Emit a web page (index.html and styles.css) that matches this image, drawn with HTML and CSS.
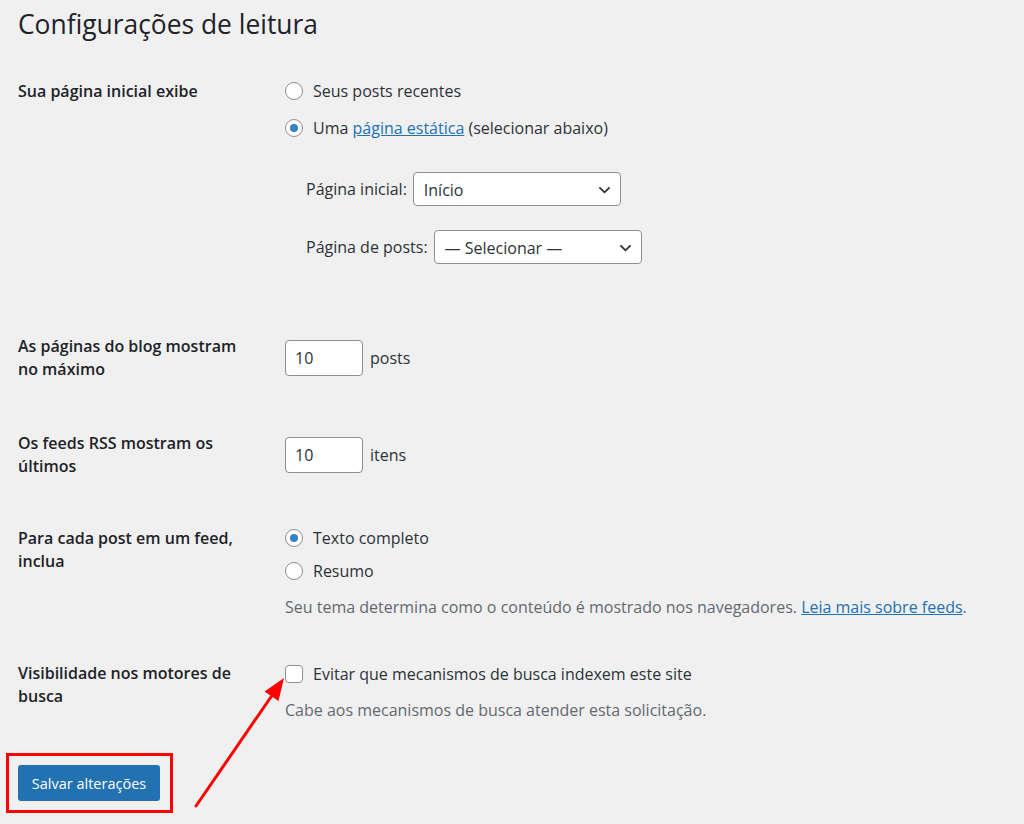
FILE: index.html
```html
<!DOCTYPE html>
<html lang="pt-BR">
<head>
<meta charset="utf-8">
<title>Configurações de leitura</title>
<link rel="stylesheet" href="styles.css">
</head>
<body>
<div class="wrap">
  <h1 class="title">Configurações de leitura</h1>

  <div class="row row1">
    <div class="th">Sua página inicial exibe</div>
    <div class="td">
      <label class="opt"><span class="radio"></span>Seus posts recentes</label>
      <label class="opt opt2"><span class="radio checked"></span>Uma&nbsp;<a class="link" href="#">página estática</a>&nbsp;(selecionar abaixo)</label>
      <div class="selrow sel1">
        <span class="sellabel">Página inicial:</span>
        <span class="select"><span>Início</span><svg class="chev" viewBox="0 0 14 8" width="13" height="8"><path d="M1.5 1.2 L7 6.5 L12.5 1.2" fill="none" stroke="#2c3338" stroke-width="2"/></svg></span>
      </div>
      <div class="selrow sel2">
        <span class="sellabel">Página de posts:</span>
        <span class="select"><span>— Selecionar —</span><svg class="chev" viewBox="0 0 14 8" width="13" height="8"><path d="M1.5 1.2 L7 6.5 L12.5 1.2" fill="none" stroke="#2c3338" stroke-width="2"/></svg></span>
      </div>
    </div>
  </div>

  <div class="row row2">
    <div class="th">As páginas do blog mostram<br>no máximo</div>
    <div class="td td-input">
      <span class="num">10</span><span class="unit">posts</span>
    </div>
  </div>

  <div class="row row3">
    <div class="th">Os feeds RSS mostram os<br>últimos</div>
    <div class="td td-input">
      <span class="num">10</span><span class="unit">itens</span>
    </div>
  </div>

  <div class="row row4">
    <div class="th">Para cada post em um feed,<br>inclua</div>
    <div class="td">
      <label class="opt"><span class="radio checked"></span>Texto completo</label>
      <label class="opt opt-b"><span class="radio"></span>Resumo</label>
      <p class="desc desc4">Seu tema determina como o conteúdo é mostrado nos navegadores. <a class="link" href="#">Leia mais sobre feeds</a>.</p>
    </div>
  </div>

  <div class="row row5">
    <div class="th">Visibilidade nos motores de<br>busca</div>
    <div class="td">
      <label class="opt optc"><span class="check"></span>Evitar que mecanismos de busca indexem este site</label>
      <p class="desc desc5">Cabe aos mecanismos de busca atender esta solicitação.</p>
    </div>
  </div>

  <div class="submit">
    <button class="button" type="button">Salvar alterações</button>
  </div>
</div>

<svg class="annot" width="1024" height="824" viewBox="0 0 1024 824">
  <rect x="7.5" y="754.5" width="164" height="57" fill="none" stroke="#ff0000" stroke-width="3"/>
  <line x1="196" y1="806" x2="273" y2="694" stroke="#ff0000" stroke-width="3" stroke-linecap="round"/>
  <polygon points="284,678 278.5,701 264.5,691.5" fill="#ff0000"/>
</svg>
</body>
</html>
```

FILE: styles.css
```css
html, body {
  margin: 0;
  padding: 0;
}
body {
  background: #f0f0f1;
  color: #1d2327;
  font-family: "Open Sans", "Liberation Sans", sans-serif;
  font-size: 16px;
  width: 1024px;
  height: 824px;
  overflow: hidden;
  position: relative;
}
.wrap {
  padding-left: 18px;
}
.title {
  margin: 0;
  padding-top: 5px;
  font-size: 26.4px;
  font-weight: 400;
  line-height: 38px;
  color: #1d2327;
}
.row {
  display: flex;
  align-items: flex-start;
}
.th {
  width: 267px;
  flex-shrink: 0;
  font-weight: 600;
  line-height: 23px;
}
.td {
  line-height: 22px;
}
.row1 { margin-top: 37px; }
.row2 { margin-top: 71px; }
.row3 { margin-top: 51px; }
.row4 { margin-top: 49px; }
.row5 { margin-top: 44px; }

.opt {
  display: flex;
  align-items: center;
  height: 22px;
  color: #2c3338;
}
.opt2 { margin-top: 15px; }
.opt-b { margin-top: 11px; }

.radio {
  width: 16px;
  height: 16px;
  border: 1px solid #8c8f94;
  border-radius: 50%;
  background: #fff;
  margin-right: 10px;
  display: inline-flex;
  align-items: center;
  justify-content: center;
  flex-shrink: 0;
}
.radio.checked::before {
  content: "";
  width: 8px;
  height: 8px;
  border-radius: 50%;
  background: #3582c4;
}
.check {
  width: 16px;
  height: 16px;
  border: 1px solid #8c8f94;
  border-radius: 4px;
  background: #fff;
  margin-right: 10px;
  flex-shrink: 0;
}
.link {
  color: #2271b1;
  text-decoration: underline;
}

.selrow {
  display: flex;
  align-items: center;
  padding-left: 21px;
  color: #2c3338;
}
.sel1 { margin-top: 33px; }
.sel2 { margin-top: 24px; }
.sellabel {
  margin-right: 6px;
}
.select {
  display: flex;
  align-items: center;
  justify-content: space-between;
  box-sizing: border-box;
  width: 208px;
  height: 34px;
  padding: 1px 9px 0 10px;
  border: 1px solid #8c8f94;
  border-radius: 4px;
  background: #fff;
  color: #2c3338;
}
.chev { display: block; }

.td-input {
  display: flex;
  align-items: center;
  padding-top: 5px;
}
.num {
  box-sizing: border-box;
  width: 78px;
  height: 36px;
  padding-left: 9px;
  display: flex;
  align-items: center;
  border: 1px solid #8c8f94;
  border-radius: 4px;
  background: #fff;
  color: #2c3338;
}
.unit {
  margin-left: 7px;
  color: #2c3338;
}

.desc {
  margin: 0;
  color: #646970;
  line-height: 22px;
}
.desc4 { margin-top: 14px; }
.desc5 { margin-top: 14px; }
.optc { margin-top: 1px; }

.submit {
  margin-top: 44px;
}
.button {
  box-sizing: border-box;
  width: 142px;
  height: 36px;
  border: 0;
  border-radius: 3px;
  background: #2271b1;
  color: #fff;
  font-family: "Open Sans", "Liberation Sans", sans-serif;
  font-size: 14.5px;
  padding: 0;
}
.annot {
  position: absolute;
  left: 0;
  top: 0;
  pointer-events: none;
}
```
